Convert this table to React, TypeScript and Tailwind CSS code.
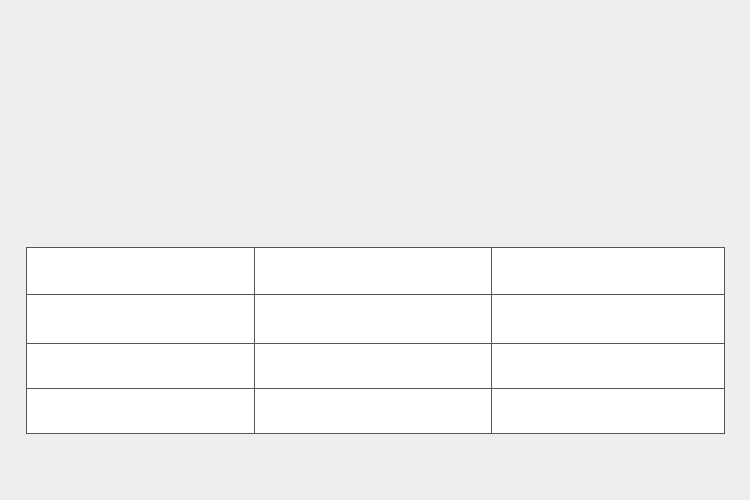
const rows = [0, 1, 2, 3];
const cols = [0, 1, 2];

export default function App() {
  return (
    <div className="min-h-screen w-full bg-[#eeeeee] pt-[247px] pl-[26px]">
      {/* empty grid table */}
      <div className="grid w-[699px] grid-cols-[227px_236px_232px] grid-rows-[46px_48px_44px_44px] gap-px bg-[#555555] p-px">
        {rows.map((r) =>
          cols.map((c) => <div key={`${r}-${c}`} className="bg-white" />)
        )}
      </div>
    </div>
  );
}
